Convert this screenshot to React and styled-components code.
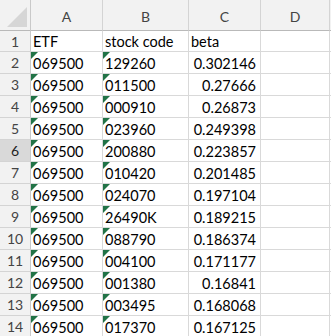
import styled, { createGlobalStyle } from "styled-components";

const GlobalStyle = createGlobalStyle`
  html, body {
    margin: 0;
    padding: 0;
    background: #ffffff;
  }
`;

const Sheet = styled.div`
  width: 331px;
  height: 336px;
  overflow: hidden;
  display: grid;
  grid-template-columns: 31px 72px 86px 72px 69px 1fr;
  grid-auto-rows: 22px;
  grid-template-rows: 31px 21px;
  font-family: Lato, "Liberation Sans", sans-serif;
  font-size: 14.5px;
  color: #000;
  background: #fff;
`;

const Corner = styled.div`
  position: relative;
  background: #f2f2f2;
  border-right: 1px solid #c9c9c9;
  border-bottom: 1px solid #b9b9b9;

  &::after {
    content: "";
    position: absolute;
    right: 3px;
    bottom: 3px;
    width: 0;
    height: 0;
    border-left: 20px solid transparent;
    border-bottom: 20px solid #d6d6d6;
  }
`;

const ColHead = styled.div`
  display: flex;
  align-items: center;
  justify-content: center;
  padding-top: 3px;
  box-sizing: border-box;
  background: #f2f2f2;
  color: #444;
  font-size: 14px;
  border-right: 1px solid #d4d4d4;
  border-bottom: 1px solid #b9b9b9;
`;

const RowHead = styled.div`
  display: flex;
  align-items: center;
  justify-content: center;
  font-size: 14px;
  background: ${(p) => (p.active ? "#d9d9d9" : "#f2f2f2")};
  color: ${(p) => (p.active ? "#222" : "#444")};
  border-right: 1px solid #c9c9c9;
  border-bottom: 1px solid #d4d4d4;
`;

const Cell = styled.div`
  position: relative;
  display: flex;
  align-items: center;
  justify-content: ${(p) => (p.right ? "flex-end" : "flex-start")};
  padding: 1px 3px 0 2px;
  padding-right: ${(p) => (p.right ? "4px" : "3px")};
  box-sizing: border-box;
  white-space: nowrap;
  overflow: visible;
  border-right: 1px solid #d9d9d9;
  border-bottom: 1px solid #d9d9d9;

  ${(p) =>
    p.flag &&
    `
    &::before {
      content: "";
      position: absolute;
      left: 0;
      top: 0;
      width: 0;
      height: 0;
      border-top: 7px solid #217346;
      border-right: 7px solid transparent;
    }
  `}
`;

const rows = [
  ["069500", "129260", "0.302146"],
  ["069500", "011500", "0.27666"],
  ["069500", "000910", "0.26873"],
  ["069500", "023960", "0.249398"],
  ["069500", "200880", "0.223857"],
  ["069500", "010420", "0.201485"],
  ["069500", "024070", "0.197104"],
  ["069500", "26490K", "0.189215"],
  ["069500", "088790", "0.186374"],
  ["069500", "004100", "0.171177"],
  ["069500", "001380", "0.16841"],
  ["069500", "003495", "0.168068"],
  ["069500", "017370", "0.167125"],
  ["", "", ""],
];

export default function App() {
  return (
    <>
      <GlobalStyle />
      <Sheet>
        <Corner />
        <ColHead>A</ColHead>
        <ColHead>B</ColHead>
        <ColHead>C</ColHead>
        <ColHead>D</ColHead>
        <ColHead />

        <RowHead>1</RowHead>
        <Cell>ETF</Cell>
        <Cell>stock code</Cell>
        <Cell>beta</Cell>
        <Cell />
        <Cell />

        {rows.map((r, i) => (
          <Row key={i} n={i + 2} data={r} />
        ))}
      </Sheet>
    </>
  );
}

function Row({ n, data }) {
  const [etf, code, beta] = data;
  return (
    <>
      <RowHead active={n === 6}>{n}</RowHead>
      <Cell flag={!!etf}>{etf}</Cell>
      <Cell flag={!!code}>{code}</Cell>
      <Cell right>{beta}</Cell>
      <Cell />
      <Cell />
    </>
  );
}
